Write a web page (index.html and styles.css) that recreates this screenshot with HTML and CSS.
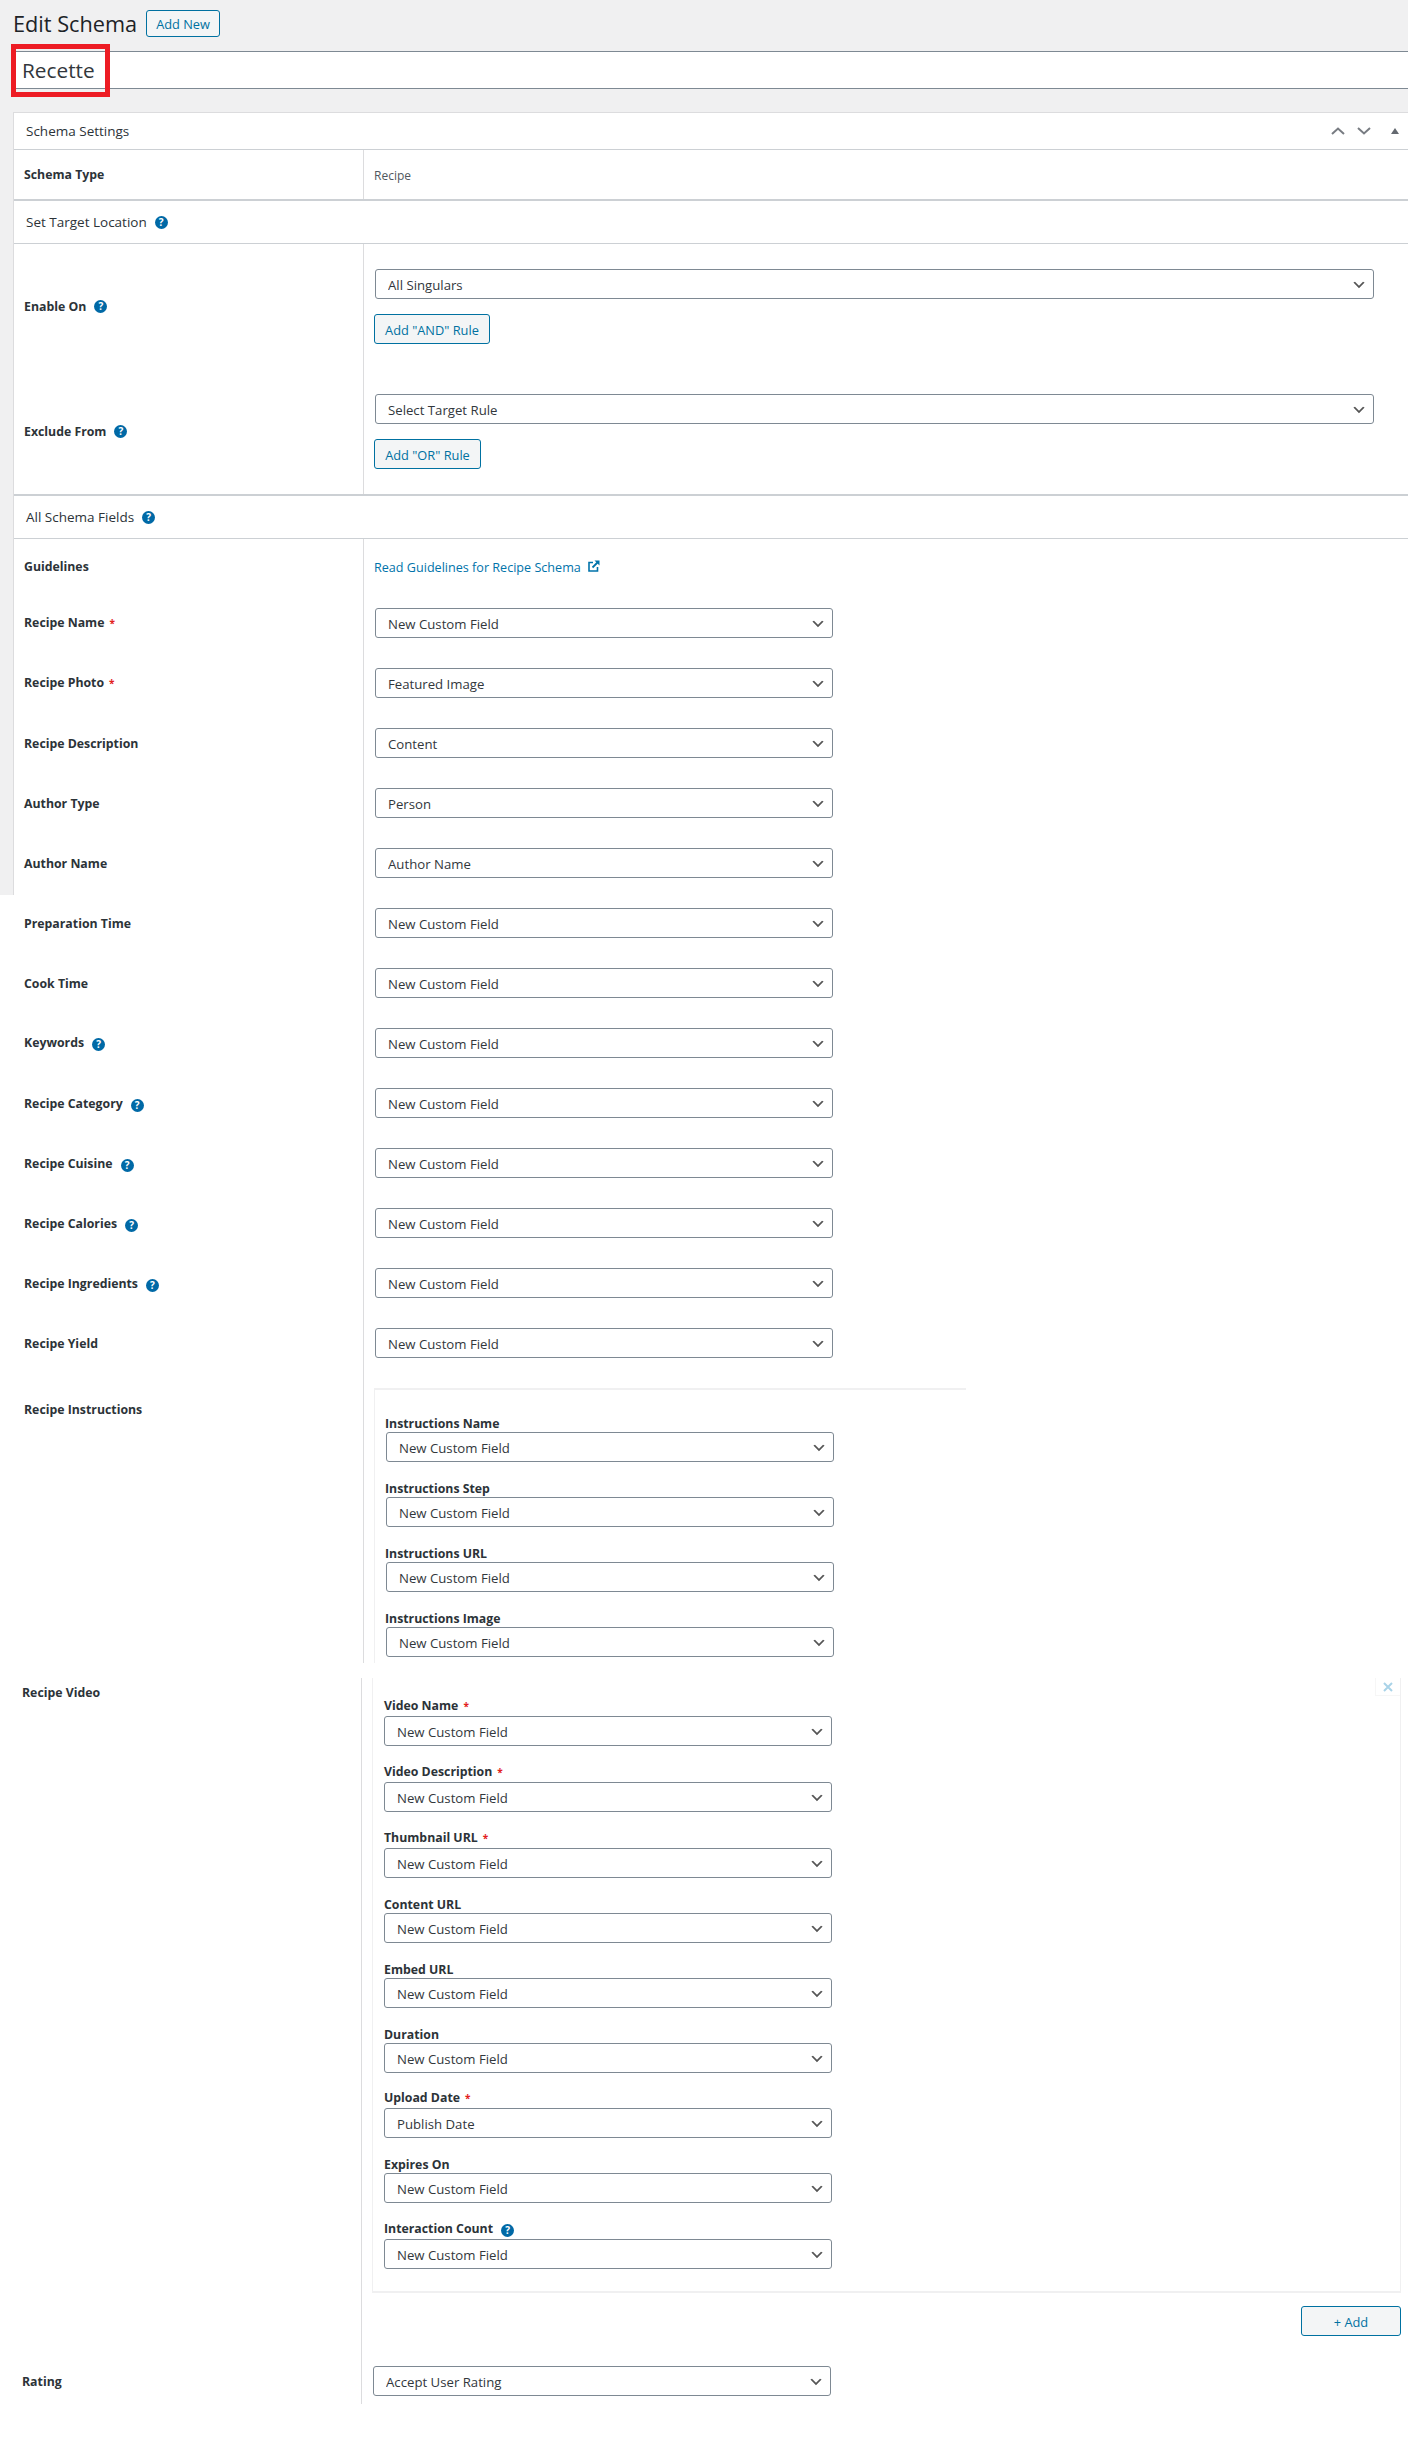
FILE: index.html
```html
<!DOCTYPE html>
<html lang="en">
<head>
<meta charset="utf-8">
<title>Edit Schema</title>
<link rel="stylesheet" href="styles.css">
</head>
<body>
<div class="upper">
  <header class="page-head">
    <h1 class="page-title">Edit Schema</h1>
    <a class="btn btn-new">Add New</a>
  </header>
  <div class="title-bar">
    <span class="title-text">Recette</span>
    <span class="highlight"></span>
  </div>
  <div class="postbox">
    <div class="box-head">
      <span class="section-title">Schema Settings</span>
      <span class="box-controls">
        <svg class="ctl" width="14" height="8" viewBox="0 0 14 8"><path d="M1 7l6-5.500 6 5.500" fill="none" stroke="#787c82" stroke-width="2"/></svg>
        <svg class="ctl" width="14" height="8" viewBox="0 0 14 8"><path d="M1 1l6 5.500 6-5.500" fill="none" stroke="#787c82" stroke-width="2"/></svg>
        <svg class="ctl ctl-tri" width="8" height="6" viewBox="0 0 8 6"><path d="M4 0l4 6H0z" fill="#646970"/></svg>
      </span>
    </div>
    <div class="row row-type">
      <div class="cell-label center"><span class="label">Schema Type</span></div>
      <div class="cell-value center"><span class="static">Recipe</span></div>
    </div>
    <div class="section-head section-target"><span class="section-title">Set Target Location</span><span class="help">?</span></div>
    <div class="row">
      <div class="cell-label center"><span class="label">Enable On</span><span class="help">?</span></div>
      <div class="cell-value rule-cell">
        <select class="select select-wide"><option>All Singulars</option></select>
        <a class="btn btn-rule btn-and">Add "AND" Rule</a>
      </div>
    </div>
    <div class="row row-end">
      <div class="cell-label center"><span class="label">Exclude From</span><span class="help">?</span></div>
      <div class="cell-value rule-cell">
        <select class="select select-wide"><option>Select Target Rule</option></select>
        <a class="btn btn-rule btn-or">Add "OR" Rule</a>
      </div>
    </div>
    <div class="section-head section-fields"><span class="section-title">All Schema Fields</span><span class="help">?</span></div>
    <div class="row row-guide">
      <div class="cell-label center"><span class="label">Guidelines</span></div>
      <div class="cell-value center">
        <a class="guide-link">Read Guidelines for Recipe Schema</a>
        <svg class="ext" width="12" height="12" viewBox="0 0 12 12"><path d="M5 2.500H1v8.500h8.500V7" fill="none" stroke="#0073aa" stroke-width="1.600"/><path d="M4.500 7.500L10 2" fill="none" stroke="#0073aa" stroke-width="1.800"/><path d="M6.500 0.500h5v5z" fill="#0073aa"/></svg>
      </div>
    </div>
    <div class="row field-row field-required"><div class="cell-label"><span class="label">Recipe Name</span><span class="req">*</span></div><div class="cell-value"><select class="select"><option>New Custom Field</option></select></div></div>
    <div class="row field-row field-required"><div class="cell-label"><span class="label">Recipe Photo</span><span class="req">*</span></div><div class="cell-value"><select class="select"><option>Featured Image</option></select></div></div>
    <div class="row field-row"><div class="cell-label"><span class="label">Recipe Description</span></div><div class="cell-value"><select class="select"><option>Content</option></select></div></div>
    <div class="row field-row"><div class="cell-label"><span class="label">Author Type</span></div><div class="cell-value"><select class="select"><option>Person</option></select></div></div>
    <div class="row field-row"><div class="cell-label"><span class="label">Author Name</span></div><div class="cell-value"><select class="select"><option>Author Name</option></select></div></div>
  </div>
</div>
<div class="lower">
  <div class="row field-row"><div class="cell-label"><span class="label">Preparation Time</span></div><div class="cell-value"><select class="select"><option>New Custom Field</option></select></div></div>
  <div class="row field-row"><div class="cell-label"><span class="label">Cook Time</span></div><div class="cell-value"><select class="select"><option>New Custom Field</option></select></div></div>
  <div class="row field-row field-required"><div class="cell-label"><span class="label">Keywords</span><span class="help">?</span></div><div class="cell-value"><select class="select"><option>New Custom Field</option></select></div></div>
  <div class="row field-row"><div class="cell-label"><span class="label">Recipe Category</span><span class="help">?</span></div><div class="cell-value"><select class="select"><option>New Custom Field</option></select></div></div>
  <div class="row field-row"><div class="cell-label"><span class="label">Recipe Cuisine</span><span class="help">?</span></div><div class="cell-value"><select class="select"><option>New Custom Field</option></select></div></div>
  <div class="row field-row"><div class="cell-label"><span class="label">Recipe Calories</span><span class="help">?</span></div><div class="cell-value"><select class="select"><option>New Custom Field</option></select></div></div>
  <div class="row field-row"><div class="cell-label"><span class="label">Recipe Ingredients</span><span class="help">?</span></div><div class="cell-value"><select class="select"><option>New Custom Field</option></select></div></div>
  <div class="row field-row"><div class="cell-label"><span class="label">Recipe Yield</span></div><div class="cell-value"><select class="select"><option>New Custom Field</option></select></div></div>
  <div class="row row-instructions">
    <div class="cell-label cell-group-label"><span class="label">Recipe Instructions</span></div>
    <div class="cell-value group-cell">
      <div class="group group-instructions">
        <div class="sub-field"><div class="sub-label"><span class="label">Instructions Name</span></div><select class="select select-sub"><option>New Custom Field</option></select></div>
        <div class="sub-field"><div class="sub-label"><span class="label">Instructions Step</span></div><select class="select select-sub"><option>New Custom Field</option></select></div>
        <div class="sub-field"><div class="sub-label"><span class="label">Instructions URL</span></div><select class="select select-sub"><option>New Custom Field</option></select></div>
        <div class="sub-field"><div class="sub-label"><span class="label">Instructions Image</span></div><select class="select select-sub"><option>New Custom Field</option></select></div>
      </div>
    </div>
  </div>
</div>
<div class="lower-shifted">
  <div class="row">
    <div class="cell-label cell-video-label"><span class="label">Recipe Video</span></div>
    <div class="cell-value group-cell">
      <div class="group group-video">
        <span class="group-close"><svg width="10" height="10" viewBox="0 0 10 10"><path d="M1 1l8 8M9 1l-8 8" stroke="#a9d3e8" stroke-width="2"/></svg></span>
        <div class="video-field field-tall"><div class="video-label"><span class="label">Video Name</span><span class="req">*</span></div><select class="select select-sub"><option>New Custom Field</option></select></div>
        <div class="video-field field-tall"><div class="video-label"><span class="label">Video Description</span><span class="req">*</span></div><select class="select select-sub"><option>New Custom Field</option></select></div>
        <div class="video-field"><div class="video-label"><span class="label">Thumbnail URL</span><span class="req">*</span></div><select class="select select-sub"><option>New Custom Field</option></select></div>
        <div class="video-field"><div class="video-label plain"><span class="label">Content URL</span></div><select class="select select-sub"><option>New Custom Field</option></select></div>
        <div class="video-field"><div class="video-label plain"><span class="label">Embed URL</span></div><select class="select select-sub"><option>New Custom Field</option></select></div>
        <div class="video-field"><div class="video-label plain"><span class="label">Duration</span></div><select class="select select-sub"><option>New Custom Field</option></select></div>
        <div class="video-field"><div class="video-label"><span class="label">Upload Date</span><span class="req">*</span></div><select class="select select-sub"><option>Publish Date</option></select></div>
        <div class="video-field field-tall"><div class="video-label plain"><span class="label">Expires On</span></div><select class="select select-sub"><option>New Custom Field</option></select></div>
        <div class="video-field"><div class="video-label"><span class="label">Interaction Count</span><span class="help">?</span></div><select class="select select-sub"><option>New Custom Field</option></select></div>
      </div>
      <div class="add-row"><a class="btn btn-add">+ Add</a></div>
    </div>
  </div>
  <div class="row row-rating">
    <div class="cell-label cell-rating-label"><span class="label">Rating</span></div>
    <div class="cell-value rating-value"><select class="select"><option>Accept User Rating</option></select></div>
  </div>
</div>
</body>
</html>
```
FILE: styles.css
```css
* { box-sizing: border-box; }
html, body { margin: 0; padding: 0; }
body {
  min-height: 2440px;
  background: #fff;
  color: #2c3338;
  font-family: "Open Sans", "Noto Sans", sans-serif;
  font-size: 13px;
  line-height: 20px;
}
a { text-decoration: none; }

.upper { height: 895px; background: #f0f0f1; overflow: hidden; }
.page-head { display: flex; align-items: flex-start; height: 51px; padding: 10px 0 0 13px; }
.page-title { margin: 0 9px 0 0; font-size: 21.7px; font-weight: 400; line-height: 28px; color: #1d2327; }
.btn {
  display: inline-flex; align-items: center; justify-content: center;
  height: 30px; padding-top: 1px; border: 1px solid #0071a1; border-radius: 3px;
  background: #f3f5f6; color: #0071a1; font-size: 12.8px;
}
.btn-new { width: 74px; height: 27px; }
.title-bar {
  position: relative; height: 38px; margin-left: 13px; margin-bottom: 23px;
  padding-left: 9px; background: #fff;
  border-top: 1px solid #7e8993; border-bottom: 1px solid #7e8993;
  font-size: 20.8px; line-height: 37px; color: #32373c;
}
.highlight {
  position: absolute; left: -2px; top: -8px; width: 99px; height: 53px;
  border: 5px solid #ed1c24;
}
.postbox { margin-left: 13px; height: 783px; background: #fff; border-top: 1px solid #dcdcde; border-left: 1px solid #dcdcde; }
.box-head { display: flex; justify-content: space-between; align-items: center; height: 37px; padding-left: 12px; border-bottom: 1px solid #ccd0d4; }
.box-controls { display: flex; align-items: center; gap: 12px; padding-right: 9px; }
.ctl-tri { margin-left: 8px; }
.section-title { font-size: 13.5px; }
.section-head { display: flex; align-items: center; padding-left: 12px; }
.section-target { height: 43px; border-bottom: 1px solid #ccd0d4; }
.section-fields { height: 43px; border-bottom: 1px solid #ccd0d4; }

.row { display: grid; grid-template-columns: 350px 1fr; }
.row-type { height: 51px; border-bottom: 2px solid #ccd0d4; }
.row-end { border-bottom: 2px solid #ccd0d4; }
.row-guide { height: 56px; }
.cell-label { padding-left: 10px; border-right: 1px solid #dcdcde; }
.cell-value { padding-left: 11px; }
.center { display: flex; align-items: center; }
.label { font-weight: 700; font-size: 12.3px; color: #2c3338; }
.static { margin-left: -1px; padding-top: 2px; font-size: 12px; color: #50575e; }
.help {
  display: inline-flex; align-items: center; justify-content: center;
  width: 13px; height: 13px; margin-left: 8px; border-radius: 50%;
  background: #0069a6; color: #fff; font-size: 10px; font-weight: 700; line-height: 13px;
  vertical-align: -1px;
}
.req { margin-left: 5px; color: #e2211c; font-size: 10px; font-weight: 700; }

.select {
  display: block; width: 458px; height: 30px; margin: 0; padding: 2px 24px 0 12px;
  border: 1px solid #7e8993; border-radius: 3px; outline: 0;
  appearance: none; -webkit-appearance: none;
  background: #fff url("data:image/svg+xml,%3Csvg xmlns='http://www.w3.org/2000/svg' width='20' height='20' viewBox='0 0 20 20'%3E%3Cpath fill='%23555' d='M5 6l5 5 5-5 2 1-7 7-7-7 2-1z'/%3E%3C/svg%3E") no-repeat right 6px top 55% / 16px 16px;
  color: #32373c; font-family: inherit; font-size: 13.2px; line-height: 26px;
}
.select-wide { width: 999px; }
.select-sub { width: 448px; }

.rule-cell { padding-top: 25px; padding-bottom: 25px; }
.btn-rule { margin: 15px 0 0 -1px; }
.btn-and { width: 116px; }
.btn-or { width: 107px; }
.guide-link { margin-left: -1px; padding-top: 1px; color: #0073aa; font-size: 12.6px; }
.ext { margin-left: 7px; margin-top: -2px; }

.field-row .cell-label { padding-top: 18px; padding-bottom: 22px; height: 60px; }
.field-row.field-required .cell-label { padding-top: 17px; padding-bottom: 23px; }
.field-row .cell-value { padding-top: 13px; padding-bottom: 17px; }

.lower { padding-left: 14px; }
.row-instructions { height: 288px; }
.cell-group-label { padding-top: 24px; }
.group-cell { padding-left: 10px; }
.group-instructions { width: 592px; height: 275px; margin-top: 13px; padding: 24px 0 0 11px; border-top: 2px solid #f0f0f1; border-left: 1px solid #f0f0f1; }
.sub-field { margin-bottom: 17px; }
.sub-label { height: 18px; margin-left: -1px; line-height: 18px; }

.lower-shifted { padding-left: 12px; margin-top: 15px; }
.cell-video-label { padding-top: 4px; }
.group-video { position: relative; width: 1029px; height: 615px; padding: 17px 0 0 11px; border-left: 1px solid #f0f0f1; border-right: 1px solid #f0f0f1; border-bottom: 2px solid #f0f0f1; }
.group-video .select { padding-top: 1px; }
.video-field { margin-bottom: 14px; }
.video-field.field-tall { margin-bottom: 15px; }
.video-label { height: 21px; line-height: 20px; }
.video-label.plain { padding-top: 2px; }
.group-close {
  position: absolute; top: 0; right: 0; display: flex; align-items: center; justify-content: center;
  width: 25px; height: 18px; border-left: 1px solid #f6f6f6; border-bottom: 1px solid #f6f6f6;
}
.add-row { display: flex; justify-content: flex-end; width: 1029px; padding-top: 13px; }
.btn-add { width: 100px; }
.row-rating { height: 68px; }
.cell-rating-label { padding-top: 35px; }
.rating-value { padding-top: 30px; }
```
